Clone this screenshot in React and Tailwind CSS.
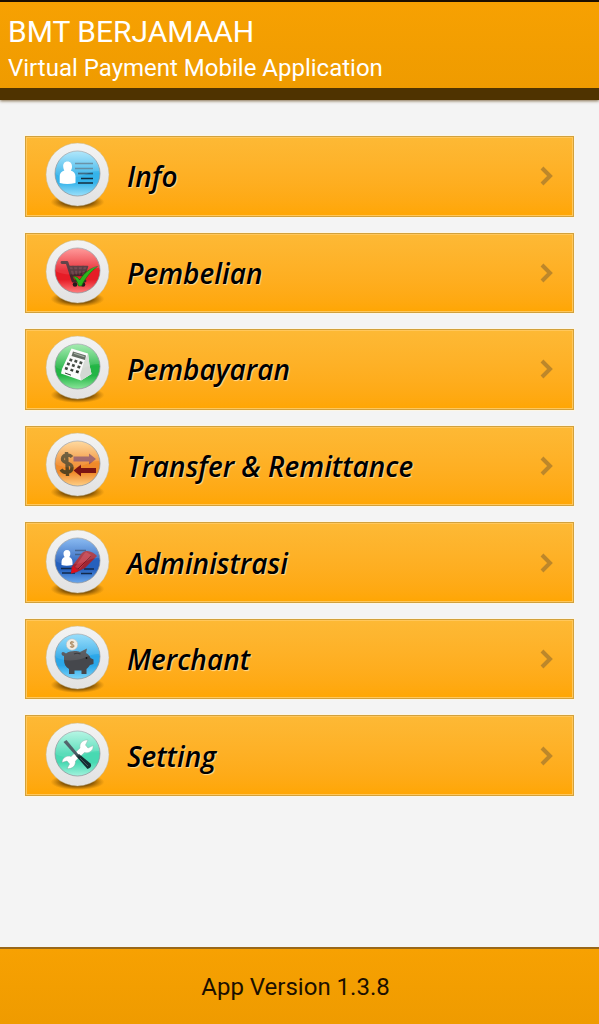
import React from "react";

function Badge({ id, light, dark, children }) {
  return (
    <svg viewBox="0 0 90 76" className="h-[76px] w-[90px] shrink-0" aria-hidden="true">
      <defs>
        <linearGradient id={id + "-disc"} x1="0" y1="0" x2="0" y2="1">
          <stop offset="0" stopColor={light} />
          <stop offset="0.5" stopColor={dark} />
          <stop offset="0.7" stopColor={dark} />
          <stop offset="1" stopColor={light} />
        </linearGradient>
        <linearGradient id={id + "-ring"} x1="0" y1="0" x2="0" y2="1">
          <stop offset="0" stopColor="#f3f3f3" />
          <stop offset="1" stopColor="#e2e2e2" />
        </linearGradient>
        <linearGradient id={id + "-gloss"} x1="0" y1="0" x2="0" y2="1">
          <stop offset="0" stopColor="#fff" stopOpacity="0.55" />
          <stop offset="1" stopColor="#fff" stopOpacity="0.22" />
        </linearGradient>
        <radialGradient id={id + "-shade"}>
          <stop offset="0.4" stopColor="#4a2c00" stopOpacity="0.95" />
          <stop offset="1" stopColor="#7a4a00" stopOpacity="0" />
        </radialGradient>
      </defs>
      <ellipse cx="42.500" cy="64" rx="27" ry="8" fill={`url(#${id}-shade)`} />
      <circle cx="42.500" cy="36.500" r="31.500" fill={`url(#${id}-ring)`} stroke="#c9b88f" strokeWidth="0.500" />
      <circle cx="42.500" cy="35.500" r="22.500" fill={`url(#${id}-disc)`} stroke="#8b9096" strokeWidth="0.700" />
      {children}
      <path d="M20.500 36A22 22 0 0 1 64.500 33C56 32 50 38 41 39C33 40 26 39 20.500 36Z" fill={`url(#${id}-gloss)`} opacity="0.400" />
    </svg>
  );
}

function InfoIcon() {
  return (
    <Badge id="info" light="#9be0fa" dark="#35b3ea">
      <path
        d="M32.500 23.500C29.500 23.500 28 25.800 28.200 28.500C28.300 30.500 28.900 31.500 29.300 32.500C26 33.500 24.700 35.500 24.700 38.500V45Q32 47 40.500 45V38.500C40.500 35.500 39 33.500 35.800 32.500C36.500 31.500 37 30.500 37 28.500C37 25.800 35.500 23.500 32.500 23.500Z"
        fill="#fff"
      />
      <g strokeWidth="1.700">
        <path d="M40 25.500H58M40 30.500H58" stroke="#4f7f98" />
        <path d="M43 35.500H58" stroke="#285a76" />
        <path d="M46 40.500H58M43 45H58" stroke="#142f40" />
      </g>
    </Badge>
  );
}

function CartIcon() {
  return (
    <Badge id="cart" light="#ff7e7e" dark="#e61c26">
      <g fill="none" stroke="#46252b" strokeLinejoin="round" strokeLinecap="round">
        <path d="M27 27.500H32L38 46H50" strokeWidth="2.800" />
        <path d="M33.500 31.500H52.500L49.500 40.500H36.500Z" fill="#64343c" strokeWidth="1.600" />
        <path d="M35 35H51M38 31.500L40 40M43 31.500V40M48 31.500L46 40" strokeWidth="1.500" />
      </g>
      <circle cx="40" cy="49.500" r="2.300" fill="#251a1c" />
      <circle cx="48" cy="49.500" r="2.300" fill="#251a1c" />
      <path d="M38 41.500C42 41 43.500 43.500 44.700 45C49 38 55 33 62.500 31.500C55 37 50.500 43 46.500 51H43.500C42.500 47 41 44 38 41.500Z" fill="#2bb51d" stroke="#12670f" strokeWidth="0.600" />
    </Badge>
  );
}

function RegisterIcon() {
  return (
    <Badge id="register" light="#8be69a" dark="#23b545">
      <path d="M36.500 17.500L53 22.500L54.500 34L56.500 43L46 49.500L26 42.500L27 38Z" fill="#fafafa" />
      <path d="M53 22.500L49 31L45 44L46 49.500L56.500 43L54.500 34Z" fill="#d3d8d3" />
      <path d="M38 20.500L51 24.500L50 29L36.500 25Z" fill="#485348" />
      <path d="M39 22.300L49.500 25.700" stroke="#97a497" strokeWidth="1.200" />
      <path
        d="M34.500 28.500l2.700 1M39.500 29.800l2.700 1M44.500 31.200l2.700 1M32 32.500l2.700 1M37 34l2.700 1M42.500 35.500l2.700 1M30 37l2.700 1M35.500 38.600l2.700 1M41 40.200l2.700 1"
        stroke="#2a332a"
        strokeWidth="2.600"
      />
      <path d="M30 42L36 44.200" stroke="#354035" strokeWidth="1" />
    </Badge>
  );
}

function TransferIcon() {
  return (
    <Badge id="transfer" light="#ffcf85" dark="#f08a2a">
      <path
        d="M37 29C34.500 26 28 26 27.500 31C27 36 37 33.500 37 39.500C37 45.500 28.500 45.500 26 41.500M31.500 24L32.500 48"
        fill="none"
        stroke="#59441f"
        strokeWidth="3.400"
      />
      <path d="M38.500 28.500H54V25.500L61 31L54 36.500V33.500H38.500Z" fill="#96545a" />
      <path d="M61 40H46V36.500L38.500 42.500L46 48.500V45H61Z" fill="#7c1412" />
    </Badge>
  );
}

function AdminIcon() {
  return (
    <Badge id="admin" light="#6aa8ee" dark="#2560bd">
      <path
        d="M32 25C29.500 25 28.300 27 28.500 29C28.700 30.500 29.200 31.500 29.700 32C27.500 33 26.500 34.500 26.500 37.500V40Q31.500 41.500 37.500 40V37.500C37.500 34.500 36.500 33 34.200 32C34.700 31.500 35.200 30.500 35.300 29C35.500 27 34.500 25 32 25Z"
        fill="#fff"
      />
      <path d="M40 25.500H51M40 29.500H47" stroke="#244a7e" strokeWidth="1.500" />
      <path d="M26 43.500H38M27 48H40M49 44H59M46 48.500H57" stroke="#122849" strokeWidth="1.700" />
      <path d="M36 48.500L36.500 42L47 28C52 24 58 27 62 31L50 43L41 47.500Z" fill="#a02532" />
      <path d="M40 42L49 29L51 27L56 30L45 44Z" fill="#bf3744" />
      <path d="M36 48.500L38 41L43 46Z" fill="#e20d19" />
      <path d="M43 44L56 31" stroke="#7b1723" strokeWidth="1" />
    </Badge>
  );
}

function PiggyIcon() {
  return (
    <Badge id="piggy" light="#7dd5fa" dark="#2ba7e8">
      <path
        d="M29 35C26.500 35 25.500 31.500 28 31C29 31 30 32 31 32.500C35 29.500 42 29.500 45 31L52 27.500L51 32C54 33.500 55 35.500 55.500 37L58.500 38.500V43L55 44C53.500 46.500 52 47.500 51.500 48V53H46.500V49.500H39.500V53H34V48C30.500 46 29 43 29 39Z"
        fill="#45474c"
      />
      <path d="M39 33Q42 31.500 45.500 33" fill="none" stroke="#202226" strokeWidth="1.200" />
      <circle cx="51.500" cy="37" r="0.900" fill="#111" />
      <circle cx="37" cy="23.500" r="5.700" fill="#eee9df" stroke="#a7aeb3" strokeWidth="0.500" />
      <path d="M39 21.500C37 20 35 21 35.500 22.500C36 24 39 23 39 25C38.500 26.500 36.500 26.500 35 25.500M37 20V27" fill="none" stroke="#a07848" strokeWidth="1.100" />
    </Badge>
  );
}

function ToolsIcon() {
  return (
    <Badge id="tools" light="#a2f3dd" dark="#48d9b2">
      <path
        d="M53 22C48 21.500 44 25 45 30L36 38.500C32 37 27 40 27 44.500L32 43L34.500 46L32 50.500C37 51.500 41 47.500 40.500 43L49.500 34.500C54 36 59 32 58 27.500L53 30L50.500 27Z"
        fill="#fff"
        stroke="#6eaa9c"
        strokeWidth="0.500"
      />
      <path d="M28.500 24L31.500 22L43.500 36.500L41.500 38.500Z" fill="#344951" />
      <path d="M41 38L44 36L55.500 45.500Q57.500 49.500 52.500 51Z" fill="#142d31" />
      <path d="M45 40L53 48" stroke="#40595b" strokeWidth="1" />
    </Badge>
  );
}

const items = [
  { label: "Info", Icon: InfoIcon },
  { label: "Pembelian", Icon: CartIcon },
  { label: "Pembayaran", Icon: RegisterIcon },
  { label: "Transfer & Remittance", Icon: TransferIcon },
  { label: "Administrasi", Icon: AdminIcon },
  { label: "Merchant", Icon: PiggyIcon },
  { label: "Setting", Icon: ToolsIcon },
];

export default function App() {
  return (
    <div className="flex min-h-screen flex-col bg-[#f4f4f4] font-['Roboto',sans-serif]">
      <header className="border-t-2 border-b-12 border-t-[#1c0f00] border-b-[#4f3300] bg-linear-to-b from-[#f7a102] to-[#ef9b00] px-2 pt-3 pb-0.5 text-white shadow-[0_1px_3px_rgba(80,50,0,0.7)]">
        <h1 className="text-[30px] leading-9">BMT BERJAMAAH</h1>
        <p className="text-2xl leading-9">Virtual Payment Mobile Application</p>
      </header>

      <main className="flex flex-1 flex-col px-[25px] pt-9 pb-[151px]">
        <nav className="grid flex-1 auto-rows-fr gap-4">
          {items.map(({ label, Icon }) => (
            <button
              key={label}
              type="button"
              className="flex w-full items-center border border-[#d2a13c] bg-linear-to-b from-[#fdb935] to-[#ffa603] pr-5 pl-[9px] text-left shadow-[inset_0_0_0_1px_#ffc75c,0_0_0_1px_#fdf6e6]"
            >
              <Icon />
              <span className="ml-0.5 flex-1 font-['Open_Sans',sans-serif] text-[28px] leading-9 font-semibold text-black italic text-shadow-[1px_1px_1px_rgba(255,240,200,0.7)]">
                {label}
              </span>
              <svg viewBox="0 0 14 20" className="h-5 w-3.5 shrink-0" aria-hidden="true">
                <path d="M3 2L11 10L3 18" fill="none" stroke="#bd872a" strokeWidth="4" />
              </svg>
            </button>
          ))}
        </nav>
      </main>

      <footer className="border-t-2 border-[#986719] bg-linear-to-b from-[#f7a102] to-[#ef9b00] pt-5 pr-2 pb-[19px] text-center text-2xl leading-9 text-[#1c1000]">
        App Version 1.3.8
      </footer>
    </div>
  );
}
